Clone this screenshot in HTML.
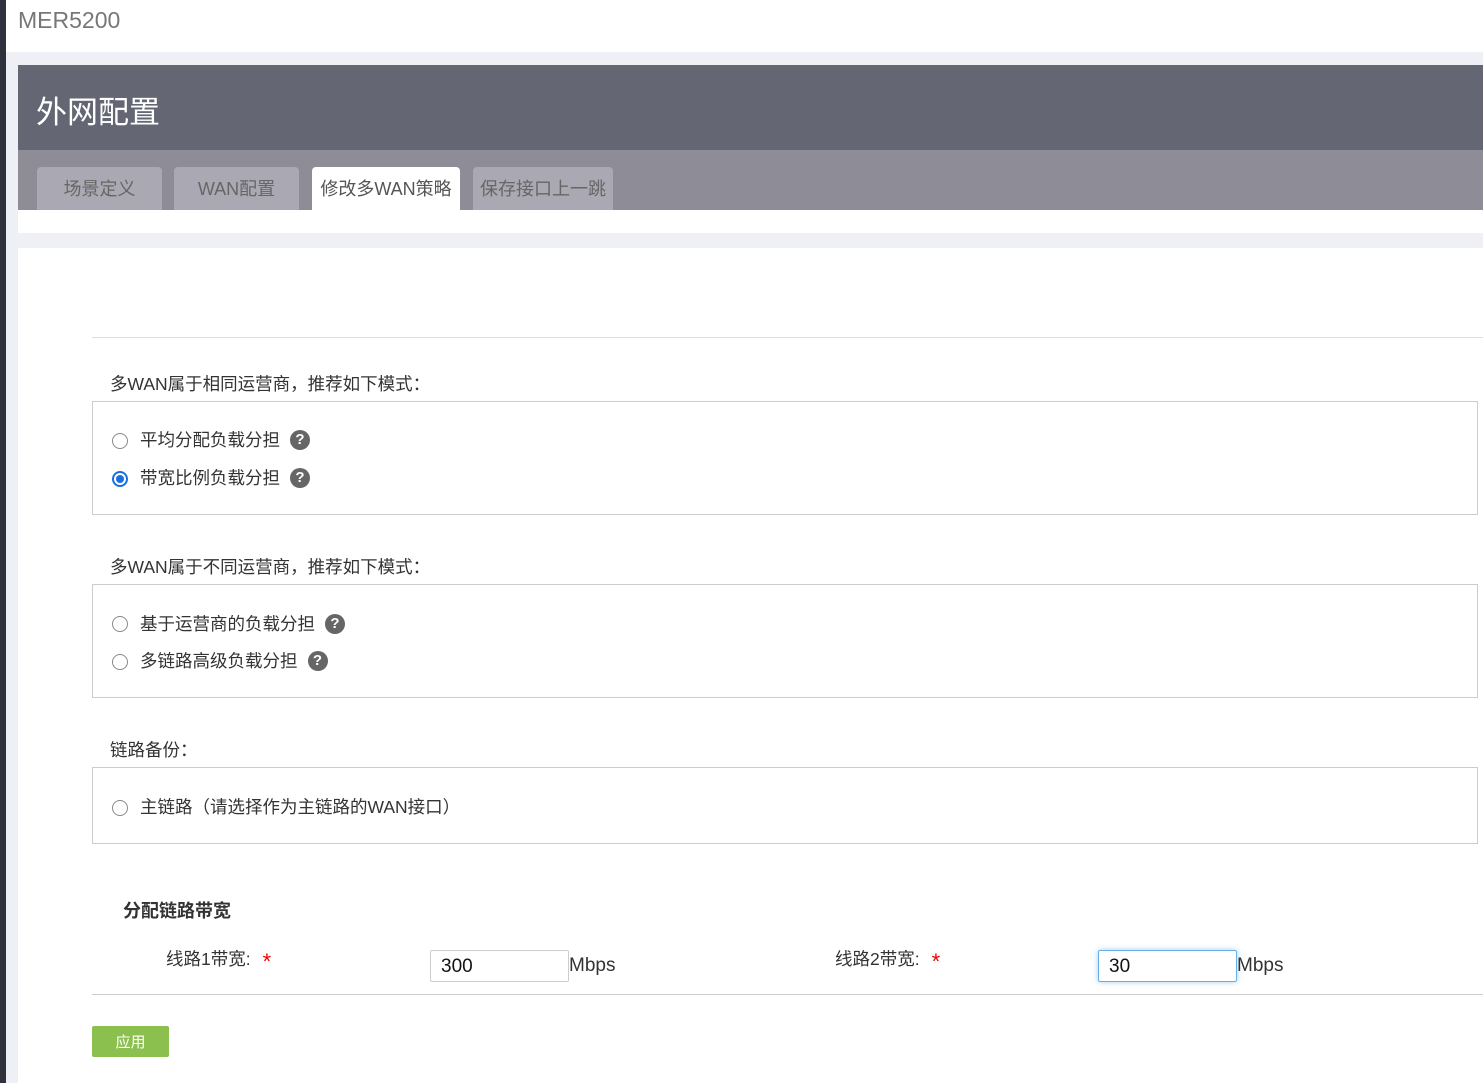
<!DOCTYPE html>
<html><head><meta charset="utf-8"><style>
*{margin:0;padding:0;box-sizing:border-box}
body{width:1483px;height:1083px;overflow:hidden;background:#efeff6;position:relative;font-family:"Liberation Sans","Noto Sans CJK SC",sans-serif;color:#333}
.a{position:absolute}
.tab{position:absolute;top:167px;height:43px;background:#aaa8b2;border-radius:4px 4px 0 0;color:#666;font-size:18px;line-height:45px;text-align:center}
.box{position:absolute;left:92px;right:5px;border:1px solid #ccc;background:#fff}
.lbl{position:absolute;left:110px;font-size:17.5px;color:#333}
.r{position:absolute;left:112px;width:16px;height:16px;border:1.5px solid #888;border-radius:50%;background:#fff}
.r.on{border:2px solid #1a6fe0}
.r.on::after{content:"";position:absolute;left:2px;top:2px;width:8px;height:8px;border-radius:50%;background:#1a6fe0}
.t{position:absolute;left:140px;font-size:17.5px;color:#333;line-height:20px}
.q{display:inline-block;width:20px;height:20px;border-radius:50%;background:#666;color:#fff;font-size:15px;font-weight:bold;text-align:center;line-height:20px;margin-left:10px;vertical-align:top}
.st{color:#e00;margin-left:12px;font-size:22px;vertical-align:-4px}
</style></head><body>
<div class="a" style="left:0;top:0;width:6px;height:1083px;background:#2f323d"></div>
<div class="a" style="left:6px;top:0;right:0;height:52px;background:#fff"></div>
<div class="a" style="left:18px;top:7px;font-size:23px;color:#777">MER5200</div>
<div class="a" style="left:18px;top:65px;right:0;height:85px;background:#646673"></div>
<div class="a" style="left:36px;top:87px;font-size:31px;color:#fff">外网配置</div>
<div class="a" style="left:18px;top:150px;right:0;height:60px;background:#8e8c96"></div>
<div class="tab" style="left:37px;width:125px">场景定义</div>
<div class="tab" style="left:174px;width:125px">WAN配置</div>
<div class="tab" style="left:312px;width:148px;background:#fff;color:#555">修改多WAN策略</div>
<div class="tab" style="left:473px;width:140px">保存接口上一跳</div>
<div class="a" style="left:18px;top:210px;right:0;height:23px;background:#fff"></div>
<div class="a" style="left:18px;top:248px;right:0;height:835px;background:#fff"></div>
<div class="a" style="left:92px;top:337px;right:0;height:1px;background:#ddd"></div>

<div class="lbl" style="top:371px">多WAN属于相同运营商，推荐如下模式：</div>
<div class="box" style="top:401px;height:114px"></div>
<div class="r" style="top:433px"></div><div class="t" style="top:430px">平均分配负载分担<span class="q">?</span></div>
<div class="r on" style="top:471px"></div><div class="t" style="top:468px">带宽比例负载分担<span class="q">?</span></div>

<div class="lbl" style="top:554px">多WAN属于不同运营商，推荐如下模式：</div>
<div class="box" style="top:584px;height:114px"></div>
<div class="r" style="top:616px"></div><div class="t" style="top:614px">基于运营商的负载分担<span class="q">?</span></div>
<div class="r" style="top:654px"></div><div class="t" style="top:651px">多链路高级负载分担<span class="q">?</span></div>

<div class="lbl" style="top:737px">链路备份：</div>
<div class="box" style="top:767px;height:77px"></div>
<div class="r" style="top:800px"></div><div class="t" style="top:797px">主链路（请选择作为主链路的WAN接口）</div>

<div class="a" style="left:123px;top:897px;font-size:18px;font-weight:bold;color:#333">分配链路带宽</div>
<div class="a" style="left:166px;top:946px;font-size:17.5px">线路1带宽:<span class="st">*</span></div>
<div class="a" style="left:430px;top:950px;width:139px;height:32px;border:1px solid #ccc;border-radius:2px;font-size:19px;line-height:32px;padding-left:10px;color:#111">300</div>
<div class="a" style="left:569px;top:955px;font-size:19px">Mbps</div>
<div class="a" style="left:835px;top:946px;font-size:17.5px">线路2带宽:<span class="st">*</span></div>
<div class="a" style="left:1098px;top:950px;width:139px;height:32px;border:1px solid #66afe9;border-radius:2px;box-shadow:0 0 6px rgba(102,175,233,.6);font-size:19px;line-height:32px;padding-left:10px;color:#111">30</div>
<div class="a" style="left:1237px;top:955px;font-size:19px">Mbps</div>
<div class="a" style="left:92px;top:994px;right:0;height:1px;background:#ccc"></div>
<div class="a" style="left:92px;top:1026px;width:77px;height:31px;background:#8bc04f;border-radius:2px;color:#fff;font-size:15px;text-align:center;line-height:33px">应用</div>
</body></html>
